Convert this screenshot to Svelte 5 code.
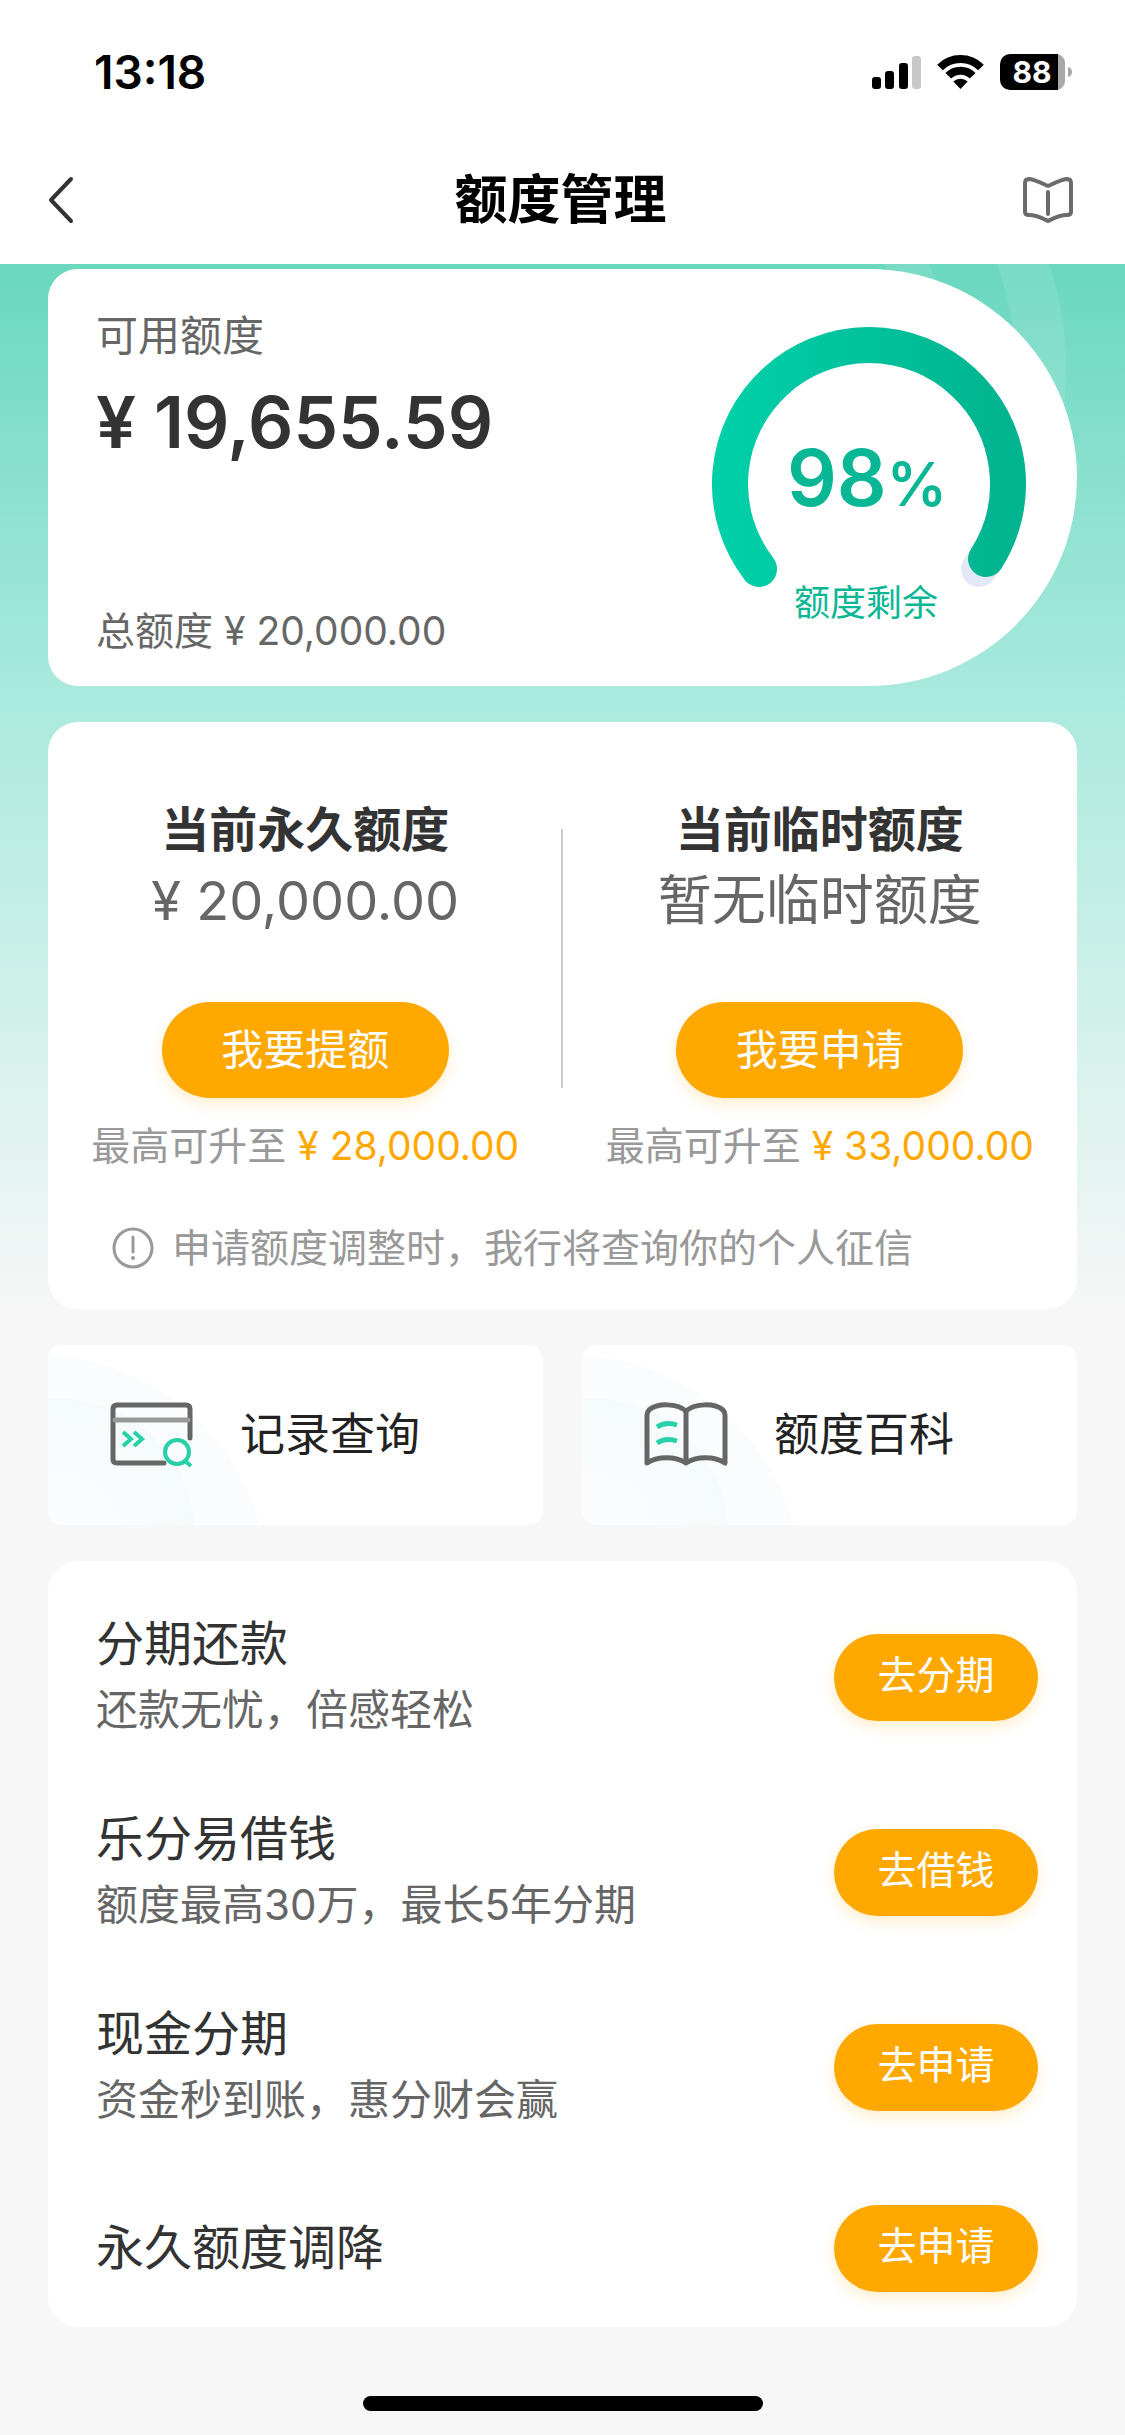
<script lang="ts">
    type Quota = { title: string; value: string; action: string; max: string };
    type Service = { title: string; desc?: string; action: string };

    const percent = 98;

    const quotas: Quota[] = [
        { title: "当前永久额度", value: "¥ 20,000.00", action: "我要提额", max: "¥ 28,000.00" },
        { title: "当前临时额度", value: "暂无临时额度", action: "我要申请", max: "¥ 33,000.00" },
    ];

    const services: Service[] = [
        { title: "分期还款", desc: "还款无忧，倍感轻松", action: "去分期" },
        { title: "乐分易借钱", desc: "额度最高30万，最长5年分期", action: "去借钱" },
        { title: "现金分期", desc: "资金秒到账，惠分财会赢", action: "去申请" },
        { title: "永久额度调降", action: "去申请" },
    ];

    // open ring, both ends sit below the centre
    const arc = "M47 243A139 139 0 1 1 267 243";
</script>

<div class="page">
    <header>
        <div class="status">
            <span class="time">13:18</span>
            <div class="status-icons">
                <svg width="49" height="36" viewBox="0 0 49 36" aria-hidden="true">
                    <rect x="0" y="23" width="9" height="12" rx="3" />
                    <rect x="13" y="17" width="9" height="18" rx="3" />
                    <rect x="27" y="9" width="9" height="26" rx="3" />
                    <rect x="40" y="2" width="9" height="33" rx="3" fill="#c8c8c8" />
                </svg>
                <svg width="47" height="36" viewBox="0 0 47 36" aria-hidden="true">
                    <g fill="none" stroke="#000" stroke-width="8">
                        <path d="M3 13.5A29 29 0 0 1 44 13.5" />
                        <path d="M11.3 21.8A17.2 17.2 0 0 1 35.7 21.8" />
                    </g>
                    <path d="M23.5 35L16.3 27.6A10.4 10.4 0 0 1 30.7 27.6Z" />
                </svg>
                <svg width="72" height="36" viewBox="0 0 72 36" role="img" aria-label="电量 88%">
                    <path d="M56 0H57A9 9 0 0 1 65 9V27A9 9 0 0 1 57 36H56Z" fill="#a8a8a8" />
                    <path d="M10 0H58V36H10A10 10 0 0 1 0 26V10A10 10 0 0 1 10 0Z" />
                    <path d="M68 13Q72 14 72 18T68 23Z" fill="#a8a8a8" />
                    <text x="32" y="29" text-anchor="middle" class="battery">88</text>
                </svg>
            </div>
        </div>
        <nav>
            <button class="icon-btn" aria-label="返回">
                <svg width="26" height="48" viewBox="0 0 26 48">
                    <path d="M23 3L3 24L23 45" fill="none" stroke="#333" stroke-width="4" stroke-linecap="round" stroke-linejoin="round" />
                </svg>
            </button>
            <h1>额度管理</h1>
            <button class="icon-btn" aria-label="说明">
                <svg width="50" height="48" viewBox="0 0 50 48">
                    <g fill="none" stroke="#6b6b6b" stroke-width="4" stroke-linecap="round" stroke-linejoin="round">
                        <path d="M25 10C20 8 14 4 6 3Q2 3 2 7V36Q2 39 6 39C14 39 19 42 25 45C31 42 36 39 44 39Q48 39 48 36V7Q48 3 44 3C36 4 30 8 25 10Z" />
                        <path d="M25 16V38" />
                    </g>
                </svg>
            </button>
        </nav>
    </header>

    <main>
        <svg class="rings" width="500" height="420" viewBox="0 0 500 420" aria-hidden="true">
            <g fill="none" stroke="#fff" stroke-opacity="0.1">
                <circle cx="91" cy="106" r="325" stroke-width="50" />
                <circle cx="91" cy="106" r="218" stroke-width="40" />
            </g>
        </svg>

        <section class="card summary">
            <div class="summary-text">
                <p class="label">可用额度</p>
                <p class="amount">¥ 19,655.59</p>
                <p class="total">总额度 ¥ 20,000.00</p>
            </div>
            <svg class="gauge" width="314" height="300" viewBox="0 0 314 300">
                <defs>
                    <linearGradient id="ring" x1="0" x2="1" y1="0" y2="0">
                        <stop offset="0" stop-color="#00cfa8" />
                        <stop offset="1" stop-color="#00b48f" />
                    </linearGradient>
                </defs>
                <g fill="none" stroke-width="36" stroke-linecap="round">
                    <path d={arc} stroke="#e3e8f6" />
                    <path d={arc} stroke="url(#ring)" pathLength="100" stroke-dasharray="{percent} 200" />
                </g>
                <text class="percent" x="155" y="180" text-anchor="middle">{percent}<tspan class="unit">%</tspan></text>
                <text class="caption" x="154" y="290" text-anchor="middle">额度剩余</text>
            </svg>
        </section>

        <section class="card quota">
            <div class="columns">
                {#each quotas as quota}
                    <div class="column">
                        <h2>{quota.title}</h2>
                        <p class="value">{quota.value}</p>
                        <button class="btn large">{quota.action}</button>
                        <p class="max">最高可升至 <span>{quota.max}</span></p>
                    </div>
                {/each}
            </div>
            <p class="notice">
                <svg width="42" height="42" viewBox="0 0 42 42" aria-hidden="true">
                    <circle cx="21" cy="21" r="19" fill="none" stroke="#999" stroke-width="3" />
                    <path d="M21 10V25" stroke="#999" stroke-width="3" stroke-linecap="round" />
                    <circle cx="21" cy="31" r="2" fill="#999" />
                </svg>
                申请额度调整时，我行将查询你的个人征信
            </p>
        </section>

        <div class="tiles">
            <a class="tile" href="#records">
                <svg width="84" height="66" viewBox="0 0 84 66" aria-hidden="true">
                    <g fill="none" stroke="#666" stroke-width="5" stroke-linecap="round">
                        <path d="M54 61H7Q3 61 3 57V7Q3 3 7 3H76Q80 3 80 7V36" />
                        <path d="M5 18H78" stroke="#999" />
                    </g>
                    <g fill="none" stroke="#27d0a8" stroke-width="4">
                        <path d="M13 30L21 37L13 44M24 30L32 37L24 44" />
                        <circle cx="67" cy="50" r="12" />
                        <path d="M74 58L81 64" />
                    </g>
                </svg>
                记录查询
            </a>
            <a class="tile" href="#wiki">
                <svg width="84" height="66" viewBox="0 0 84 66" aria-hidden="true">
                    <g fill="none" stroke="#666" stroke-width="5" stroke-linejoin="round">
                        <path d="M42 9C33 1 13 1 5 8Q3 10 3 13V61C13 54 32 54 42 61C52 54 71 54 81 61V13Q81 10 79 8C71 1 51 1 42 9Z" />
                        <path d="M42 9V61" />
                    </g>
                    <path d="M13 25Q22 19 33 23M13 41Q22 35 33 39" fill="none" stroke="#27d0a8" stroke-width="5" />
                </svg>
                额度百科
            </a>
        </div>

        <ul class="card services">
            {#each services as service}
                <li>
                    <div>
                        <h3>{service.title}</h3>
                        {#if service.desc}
                            <p class="desc">{service.desc}</p>
                        {/if}
                    </div>
                    <button class="btn">{service.action}</button>
                </li>
            {/each}
        </ul>

        <div class="home-bar"></div>
    </main>
</div>

<style>
    :global(body) {
        margin: 0;
        background: #f7f7f7;
    }

    .page {
        font-family: Inter, "Noto Sans CJK SC", sans-serif;
        color: #333;
    }

    h1,
    h2,
    h3,
    p,
    ul {
        margin: 0;
        padding: 0;
    }

    svg {
        flex-shrink: 0;
    }

    header {
        background: #fff;
    }

    .status {
        display: flex;
        align-items: center;
        justify-content: space-between;
        box-sizing: border-box;
        height: 136px;
        padding: 8px 53px 0 94px;
    }

    .time {
        font-size: 46px;
        font-weight: 600;
        color: #000;
    }

    .status-icons {
        display: flex;
        gap: 16px;
    }

    .battery {
        font-size: 30px;
        font-weight: 700;
        fill: #fff;
    }

    nav {
        display: grid;
        grid-template-columns: 1fr auto 1fr;
        align-items: center;
        height: 128px;
        padding: 0 52px 0 48px;
    }

    .icon-btn {
        display: flex;
        padding: 0;
        border: none;
        background: none;
        cursor: pointer;
    }

    .icon-btn:last-child {
        justify-self: end;
    }

    h1 {
        font-size: 53px;
        font-weight: 700;
        line-height: 72px;
        color: #000;
    }

    main {
        position: relative;
        display: flex;
        flex-direction: column;
        gap: 36px;
        padding: 5px 48px 23px;
        overflow: hidden;
        background: #f7f7f7 linear-gradient(#6ad7bf 0, #abeade 440px, #b6ece1 530px, #f7f7f7 1047px) no-repeat 0 0 / 100% 1047px;
    }

    .rings {
        position: absolute;
        top: 0;
        right: 0;
    }

    .card {
        position: relative;
        background: #fff;
        border-radius: 30px;
    }

    .summary {
        display: flex;
        justify-content: space-between;
        box-sizing: border-box;
        min-height: 417px;
        padding: 37px 51px 25px 48px;
        border-radius: 30px 209px 209px 30px;
    }

    .summary-text {
        display: flex;
        flex-direction: column;
    }

    .label,
    .total {
        line-height: 60px;
        color: #666;
    }

    .label {
        font-size: 42px;
    }

    .amount {
        margin-top: 14px;
        font-size: 71px;
        font-weight: 600;
        line-height: 84px;
    }

    .total {
        margin-top: auto;
        font-size: 39px;
    }

    .gauge {
        margin-top: 20px;
    }

    .percent {
        font-size: 78px;
        font-weight: 600;
        fill: #0ab794;
    }

    .unit {
        font-size: 60px;
    }

    .caption {
        font-size: 36px;
        fill: #0ab794;
    }

    .quota {
        padding: 72px 0 31px;
    }

    .columns {
        display: grid;
        grid-template-columns: 1fr 1fr;
        position: relative;
    }

    .columns::after {
        content: "";
        position: absolute;
        top: 35px;
        bottom: 88px;
        left: 50%;
        width: 2px;
        margin-left: -2px;
        background: #ccc;
    }

    .column {
        display: flex;
        flex-direction: column;
        align-items: center;
    }

    h2 {
        font-size: 48px;
        font-weight: 700;
        line-height: 72px;
    }

    .value {
        font-size: 54px;
        line-height: 70px;
        color: #666;
    }

    .btn {
        width: 204px;
        height: 87px;
        padding: 0 0 4px;
        border: none;
        border-radius: 48px;
        background: #ffa800;
        box-shadow: 0 6px 15px rgba(255, 168, 0, 0.2);
        color: #fff;
        font-family: inherit;
        font-size: 39px;
        line-height: 60px;
        cursor: pointer;
    }

    .btn.large {
        width: 287px;
        height: 96px;
        margin: 66px 0 18px;
        padding-bottom: 0;
        font-size: 42px;
    }

    .max {
        font-size: 39px;
        line-height: 60px;
        color: #999;
        white-space: nowrap;
    }

    .max span {
        color: #ffa800;
    }

    .notice {
        display: flex;
        align-items: center;
        gap: 18px;
        margin-top: 42px;
        padding-left: 64px;
        font-size: 39px;
        line-height: 60px;
        color: #999;
    }

    .tiles {
        display: grid;
        grid-template-columns: 1fr 1fr;
        gap: 39px;
    }

    .tile {
        display: flex;
        align-items: center;
        gap: 46px;
        height: 180px;
        padding-left: 62px;
        border-radius: 14px;
        background:
            radial-gradient(circle at 10px 190px, transparent 60px, #f5fbfa 136px, transparent 137px),
            radial-gradient(circle at -10px 240px, #fafcfd 229px, transparent 230px),
            #fff;
        font-size: 45px;
        line-height: 60px;
        color: #222;
        text-decoration: none;
    }

    .services {
        display: flex;
        flex-direction: column;
        gap: 63px;
        padding: 50px 39px 27px 48px;
        list-style: none;
    }

    .services li {
        display: flex;
        align-items: center;
        justify-content: space-between;
        min-height: 104px;
    }

    h3 {
        font-size: 48px;
        font-weight: 400;
        line-height: 66px;
    }

    .desc {
        font-size: 42px;
        line-height: 66px;
        color: #666;
    }

    .home-bar {
        align-self: center;
        width: 400px;
        height: 15px;
        margin-top: 33px;
        border-radius: 8px;
        background: #000;
    }
</style>
